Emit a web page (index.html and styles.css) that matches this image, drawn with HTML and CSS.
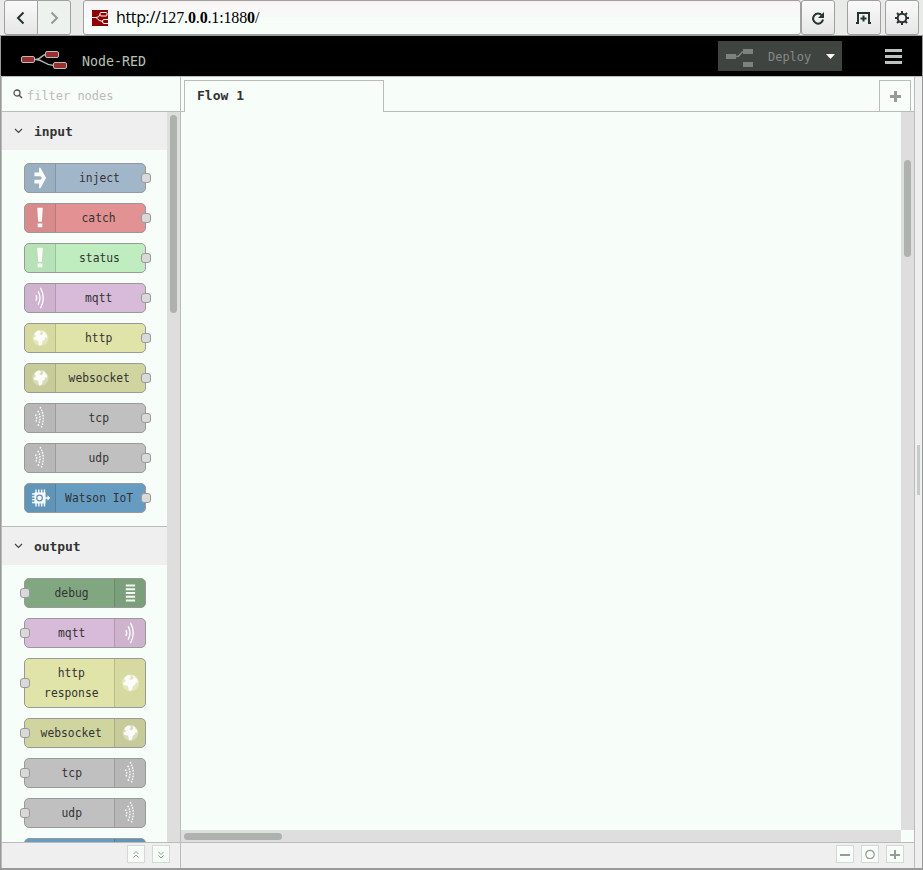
FILE: index.html
```html
<!DOCTYPE html>
<html lang="en">
<head>
<meta charset="utf-8">
<title>Node-RED</title>
<link rel="stylesheet" href="styles.css">
</head>
<body>
<svg class="defs" aria-hidden="true">
  <symbol id="inject" viewBox="0 0 30 30"><path d="M9 9h5V4h1.500l6 11-6 11H14v-5H9v-4h6.500l1.500-2-1.500-2H9z" fill="#fff"/></symbol>
  <symbol id="bang" viewBox="0 0 30 30"><path d="M12 4h6l-1 15h-4zM12.500 21h5v4h-5z" fill="#fff"/></symbol>
  <symbol id="waves" viewBox="0 0 30 30"><g fill="none" stroke="#fff" stroke-width="1.500"><path d="M10.500 12q2 3 0 6M13 8q4 7 0 14M15.500 4q6 11 0 22"/></g></symbol>
  <symbol id="dots" viewBox="0 0 30 30"><g fill="none" stroke="#fff" stroke-width="1.800" stroke-linecap="round" stroke-dasharray=".1 2.900"><path d="M10.500 12q2 3 0 7M13 8q4 7 0 15M15.500 4q6 11 0 23"/></g></symbol>
  <symbol id="globe" viewBox="0 0 30 30"><circle cx="15.500" cy="15" r="8.500" fill="#fff" opacity=".35"/><path d="M9 11q2-4 6-4l1 2-2 2 3 1 2-3 3 2 1 4-2-1-1 3-2 1-1 4-3 1-1-5-4-1-1-2 3-2zM17 7l4 2-2 1z" fill="#fff"/></symbol>
  <symbol id="chip" viewBox="0 0 30 30"><path d="M9 9h12v12H9zM10 6h1.500v18H10zM13 6h1.500v18H13zM16 6h1.500v18H16zM19 6h1.500v18H19zM6.500 10h4v1.500h-4zM6.500 13h4v1.500h-4zM6.500 16h4v1.500h-4zM6.500 19h4v1.500h-4zM20 14.300h3V12l3 3-3 3v-2.300h-3z" fill="#fff"/><circle cx="14.500" cy="15" r="3" fill="none" stroke="#5f95ba" stroke-width="1.300"/></symbol>
  <symbol id="lines" viewBox="0 0 30 30"><path d="M10.500 7h10M10.500 11h10M10.500 15h10M10.500 19h10M10.500 23h10" stroke="#fff" stroke-width="2"/></symbol>
</svg>

<div class="browser">
  <div class="nav">
    <span class="btn"><svg width="12" height="14"><path d="M8.500 1.500 3 7l5.500 5.500" class="ink"/></svg></span>
    <span class="btn off"><svg width="12" height="14"><path d="M3.500 1.500 9 7l-5.500 5.500" class="ink"/></svg></span>
  </div>
  <div class="url">
    <svg width="16" height="16"><rect width="16" height="16" fill="#8f0000"/><g fill="none" stroke="#fff"><path d="M0 7.500h4q3 0 4-3M4 7.500q3 4 7 4"/><rect x="8" y="2.500" width="7" height="3.500" rx="1"/><path d="M16 9.500h-4q-1.500 0-1.500 2t1.500 2h4"/></g></svg>
    <span><i>http://</i>127.<b>0</b>.<b>0</b>.1:188<b>0</b>/</span>
  </div>
  <span class="btn reload"><svg width="14" height="14"><path d="M11 4.500a5 5 0 1 0 1 4" class="ink"/><path d="M13 1v6H7z" fill="#263330"/></svg></span>
  <span class="btn tabbtn"><svg width="18" height="14"><path d="M1 12h2V2h11v10h2M8.500 4.500v6M5.500 7.500h6" class="ink"/></svg></span>
  <span class="btn gear"><svg width="16" height="16"><circle cx="8" cy="8" r="4.300" class="ink"/><path d="M8 1v3M8 12v3M1 8h3M12 8h3M3 3l2 2M11 11l2 2M3 13l2-2M11 5l2-2" class="ink"/></svg></span>
</div>

<div class="app">
  <header class="header">
    <svg class="logo" width="48" height="22"><g fill="none" stroke="#bbb" stroke-width="1.500"><path d="M14 10.500h2c6 0 5-5 10-5M16 10.500c8 0 8 6 18 6"/></g><g fill="#9b2f2d" stroke="#bbb"><rect x="1.500" y="7.500" width="13" height="6" rx="1.500"/><rect x="25.500" y="2.500" width="13" height="6" rx="1.500"/><rect x="33.500" y="13.500" width="13" height="6" rx="1.500"/></g></svg>
    <span class="brand">Node-RED</span>
    <div class="deploy">
      <svg width="28" height="20"><path d="M9 9.500h2c4 0 3-5 7-5" fill="none" stroke="#7d827e" stroke-width="1.500"/><path d="M0 7h10v5H0zM17 2h10v5H17zM17 15h10v5H17z" fill="#7d827e"/></svg>
      <span>Deploy</span><svg class="caret" width="10" height="5"><path d="M0 0h9L4.500 5z" fill="#fff"/></svg>
    </div>
    <div class="burger"><i></i><i></i><i></i></div>
  </header>

  <div class="main">
    <aside class="palette">
      <div class="search"><svg width="10" height="10"><circle cx="4" cy="4" r="3" fill="none" stroke="#555" stroke-width="1.300"/><path d="m6 6 3 3" stroke="#555" stroke-width="1.500"/></svg><span>filter nodes</span></div>
      <div class="scroller">
        <div class="list">
          <h3><svg width="9" height="6"><path d="m1 1 3.500 3.500L8 1"/></svg>input</h3>
          <div class="nodes in">
            <div class="node inject"><svg><use href="#inject"/></svg><p><span>inject</span></p></div>
            <div class="node catch"><svg><use href="#bang"/></svg><p><span>catch</span></p></div>
            <div class="node status"><svg><use href="#bang"/></svg><p><span>status</span></p></div>
            <div class="node mqtt"><svg><use href="#waves"/></svg><p><span>mqtt</span></p></div>
            <div class="node http"><svg><use href="#globe"/></svg><p><span>http</span></p></div>
            <div class="node ws"><svg><use href="#globe"/></svg><p><span>websocket</span></p></div>
            <div class="node net"><svg><use href="#dots"/></svg><p><span>tcp</span></p></div>
            <div class="node net"><svg><use href="#dots"/></svg><p><span>udp</span></p></div>
            <div class="node iot"><svg><use href="#chip"/></svg><p><span>Watson IoT</span></p></div>
          </div>
          <h3 class="second"><svg width="9" height="6"><path d="m1 1 3.500 3.500L8 1"/></svg>output</h3>
          <div class="nodes out">
            <div class="node debug"><svg><use href="#lines"/></svg><p><span>debug</span></p></div>
            <div class="node mqtt"><svg><use href="#waves"/></svg><p><span>mqtt</span></p></div>
            <div class="node http tall"><svg><use href="#globe"/></svg><p><span>http<br>response</span></p></div>
            <div class="node ws"><svg><use href="#globe"/></svg><p><span>websocket</span></p></div>
            <div class="node net"><svg><use href="#dots"/></svg><p><span>tcp</span></p></div>
            <div class="node net"><svg><use href="#dots"/></svg><p><span>udp</span></p></div>
            <div class="node iot"><svg><use href="#chip"/></svg><p></p></div>
          </div>
        </div>
        <div class="track"><div class="thumb"></div></div>
      </div>
      <div class="foot">
        <span class="mini"><svg width="8" height="9"><path d="m1.500 4 2.500-2.500L6.500 4M1.500 7.500 4 5l2.500 2.500"/></svg></span>
        <span class="mini"><svg width="8" height="9"><path d="M1.500 2 4 4.500 6.500 2M1.500 5.500 4 8l2.500-2.500"/></svg></span>
      </div>
    </aside>

    <section class="workspace">
      <div class="tabs"><div class="tab">Flow 1</div><div class="gap"></div><div class="add"><svg width="11" height="11"><path d="M5.500 0v11M0 5.500h11"/></svg></div><div class="end"></div></div>
      <div class="canvas"><div class="view"></div><div class="vtrack"><div class="vthumb"></div></div><div class="htrack"><div class="hthumb"></div></div><div></div></div>
      <div class="foot">
        <span class="mini zoom"><svg width="10" height="10"><path d="M0 6h10"/></svg></span>
        <span class="mini zoom"><svg width="10" height="10"><circle cx="5" cy="5.500" r="4.200"/></svg></span>
        <span class="mini zoom"><svg width="10" height="10"><path d="M0 6h10M5 1v9"/></svg></span>
      </div>
    </section>
    <div class="separator"><i></i></div>
  </div>
</div>
</body>
</html>
```

FILE: styles.css
```css
*, ::before, ::after { box-sizing: border-box; }
body { margin: 0; width: 923px; height: 870px; overflow: hidden; background: #e8ebe8; font-family: "DejaVu Sans Mono", monospace; font-size: 13px; color: #333; display: flex; flex-direction: column; }
svg { display: block; flex: none; }
p, h3 { margin: 0; }
.defs { display: none; }

.browser { height: 35px; flex: none; display: flex; padding-left: 4px; }
.nav { display: flex; width: 67px; margin-right: 12px; }
.btn { width: 34px; height: 35px; border: 1px solid #a0a0a0; border-radius: 3px; background: linear-gradient(#fafafa, #e6e6e6); display: flex; align-items: center; justify-content: center; }
.nav .btn:first-child { border-radius: 3px 0 0 3px; }
.nav .off { margin-left: -1px; border-radius: 0 3px 3px 0; background: #eef2ee; }
.ink { fill: none; stroke: #263330; stroke-width: 2; }
.off .ink { stroke: #929a95; }
.url { width: 718px; height: 35px; border: 1px solid #a0a0a0; border-radius: 3px; background: linear-gradient(#f8f0f0, #f8f8f8 4px, #f8f8f8 50%, #f7fdf9 50%); display: flex; align-items: center; padding-left: 8px; gap: 8px; font: 16px "Liberation Serif", serif; letter-spacing: -.15px; color: #000; }
.url span { margin-top: -2px; }
.url i { font: 16px "Open Sans", sans-serif; letter-spacing: -.35px; }
.url b { font-weight: bold; }
.tabbtn { margin-left: 12px; }
.gear { margin-left: 4px; }

.app { flex: 1; min-height: 0; border: 1px solid #999; border-bottom-width: 2px; display: flex; flex-direction: column; }
.header { height: 40px; flex: none; background: #000; display: flex; align-items: center; padding-left: 19px; }
.logo { margin-top: 7px; }
.brand { width: 69px; margin: 10px 0 0 14px; font-size: 14px; color: #b5c1b3; transform: scaleX(.95); transform-origin: left; }
.deploy { margin-left: 567px; width: 124px; height: 30px; background: #404441; display: flex; align-items: center; padding-left: 8px; color: #858a86; }
.deploy > svg:first-child { margin-top: 2px; }
.deploy span { width: 43px; margin-left: 14px; transform: scaleX(.92); transform-origin: left; }
.deploy .caret { margin-left: 15px; }
.burger { margin-left: 43px; width: 17px; display: flex; flex-direction: column; gap: 3px; padding-top: 1px; }
.burger i { height: 3px; background: #bcc2bf; }

.main { flex: 1; min-height: 0; border-top: 1px solid #bbb; border-left: 1px solid #bbb; display: flex; background: #f7fdf9; }
.palette { width: 179px; border-right: 1px solid #bbb; display: flex; flex-direction: column; }
.search { height: 35px; flex: none; border-bottom: 1px solid #bbb; display: flex; align-items: center; padding: 0 0 0 12px; color: #bbb; }
.search svg { margin: 0 0 1px -1px; }
.search span { margin: 2px 0 0 4px; transform: scaleX(.92); transform-origin: left; white-space: nowrap; }
.scroller { flex: 1; min-height: 0; display: flex; }
.list { width: 165px; overflow: hidden; }
h3 { height: 38px; background: #efefef; display: flex; align-items: center; gap: 11px; padding-left: 12px; font-size: 13px; letter-spacing: -.1px; }
h3 svg { fill: none; stroke: #444; stroke-width: 1.2; }
.second { height: 39px; border-top: 1px solid #bbb; }
.nodes { padding: 13px 0 13px 22px; display: flex; flex-direction: column; gap: 10px; }
.node { position: relative; width: 122px; height: 30px; border: 1px solid #999; border-radius: 5px; display: flex; flex: none; }
.node.tall { height: 50px; }
.node > svg { width: 31px; height: 100%; background: rgba(0,0,0,.045); border-right: 1px solid rgba(0,0,0,.15); border-radius: 4px 0 0 4px; opacity: .95; }
.out .node { flex-direction: row-reverse; }
.out .node > svg { border-right: 0; border-left: 1px solid rgba(0,0,0,.15); border-radius: 0 4px 4px 0; }
.node p { flex: 1; display: flex; align-items: center; justify-content: center; text-align: center; line-height: 20px; white-space: nowrap; min-width: 0; }
.in .node p { padding-right: 3px; }
.out .node p { padding-left: 4px; }
.node span { transform: scaleX(.87); }
.node::after { content: ""; position: absolute; top: calc(50% - 5px); right: -6px; width: 10px; height: 10px; border: 1px solid #999; border-radius: 3px; background: #d9d9d9; }
.out .node::after { right: auto; left: -5px; }
.inject { background: #a1b7c9; }
.catch { background: #e29292; }
.status { background: #c0edc0; }
.mqtt { background: #d8bbd8; }
.http { background: #e1e4a8; }
.ws { background: #d0d5a0; }
.net { background: #c0c0c0; }
.iot { background: #669cc1; }
.debug { background: #80a780; }
.track { width: 13px; background: #dedede; padding: 3px 0 0 3px; }
.thumb { width: 7px; height: 198px; border-radius: 4px; background: #adb2af; }

.foot { height: 26px; flex: none; border-top: 1px solid #bbb; background: #efefef; display: flex; justify-content: flex-end; align-items: flex-start; gap: 7px; padding: 2px 10px 0 0; }
.mini { width: 18px; height: 18px; border: 1px solid #d5d9d5; background: #f7fdf9; display: flex; align-items: center; justify-content: center; }
.mini svg { fill: none; stroke: #999; stroke-width: 1; }
.mini.zoom svg { stroke-width: 2; }
.mini.zoom circle { stroke-width: 1.2; }

.workspace { width: 734px; border-right: 1px solid #bbb; display: flex; flex-direction: column; }
.tabs { height: 35px; flex: none; display: flex; padding-top: 3px; }
.tabs::before { content: ""; width: 3px; border-bottom: 1px solid #bbb; }
.tab { width: 200px; border: 1px solid #bbb; border-bottom: 0; padding: 6px 0 0 12px; font-weight: bold; line-height: 17px; }
.gap { flex: 1; border-bottom: 1px solid #bbb; }
.add { width: 32px; border: 1px solid #bbb; display: flex; align-items: center; justify-content: center; padding-top: 1px; }
.add svg { stroke: #999; stroke-width: 3; }
.end { width: 3px; border-bottom: 1px solid #bbb; }
.canvas { flex: 1; display: grid; grid-template-columns: 1fr 13px; grid-template-rows: 1fr 12px; }
.vtrack { background: #dedede; padding: 48px 0 0 3px; }
.vthumb { width: 7px; height: 97px; border-radius: 4px; background: #adb2af; }
.htrack { background: #dedede; padding: 3px 0 0 3px; }
.hthumb { width: 98px; height: 7px; border-radius: 4px; background: #adb2af; }
.separator { flex: 1; background: #efefef; display: flex; align-items: center; padding-left: 2px; }
.separator i { width: 3px; height: 50px; margin-top: -6px; background: #c8ccc9; }
```
